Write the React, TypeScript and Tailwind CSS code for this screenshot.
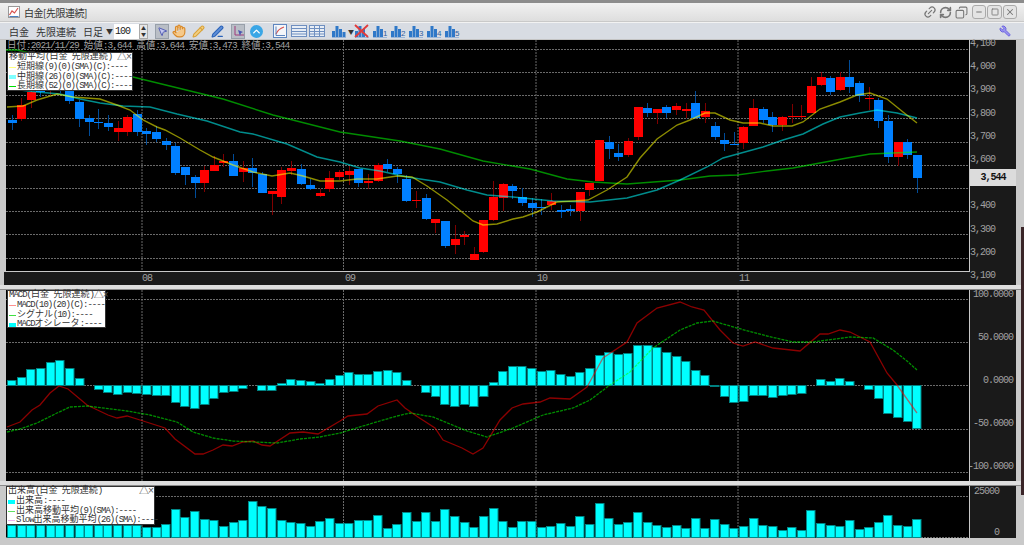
import { Hand, MousePointer2, Pencil, PenLine, Wrench, ChevronUp, Link2, RefreshCw, Copy, X, Minus, Square } from 'lucide-react'

const mono = "font-['Liberation_Mono','Noto_Sans_CJK_JP',monospace] text-[10px] tracking-[-1px]"
const mixed = "font-['Liberation_Mono','Noto_Sans_CJK_JP',monospace]"

// [wick top, body top, body bottom, wick bottom, up?]
const candles: [number, number, number, number, number][] = [
  [115,120,123,130,0],[98,105,119,121,1],[88,92,100,108,1],[85,90,92,97,0],[85,88,90,95,1],[85,88,90,93,0],[88,90,101,104,0],[100,102,119,127,0],
  [115,118,122,136,0],[109,122,123,129,0],[115,123,127,131,0],[121,128,132,141,1],[115,117,132,136,1],[110,114,132,136,0],[128,131,134,145,0],[126,132,139,142,0],
  [138,141,145,150,0],[143,146,173,175,0],[167,167,175,185,0],[175,177,183,198,0],[166,170,183,192,1],[156,165,171,171,1],[154,161,163,167,1],[154,161,176,176,0],
  [161,168,172,182,1],[158,168,173,187,0],[172,174,193,193,0],[191,191,194,215,1],[167,170,197,204,1],[161,168,171,175,1],[164,169,184,185,0],[179,185,189,190,0],
  [189,193,196,197,1],[171,178,189,192,1],[170,172,177,180,1],[166,171,175,185,1],[169,169,183,187,0],[174,181,183,189,1],[163,165,181,182,1],[159,164,169,172,0],
  [167,169,174,183,0],[175,179,201,202,0],[191,200,201,208,1],[194,198,219,220,0],[219,219,223,233,1],[221,221,246,248,0],[225,239,245,254,1],[231,235,237,245,1],
  [247,254,260,260,1],[220,220,252,253,1],[181,197,220,221,1],[183,184,198,211,1],[184,186,191,199,0],[188,197,203,206,0],[198,203,208,217,0],[199,207,208,215,0],
  [193,201,205,210,1],[205,210,212,218,0],[205,209,211,216,0],[192,192,211,221,1],[183,183,190,196,1],[140,140,181,181,1],[136,142,149,159,0],[144,153,157,161,0],
  [138,141,155,157,1],[107,107,137,140,1],[103,108,113,117,0],[109,109,113,124,1],[105,107,113,118,0],[103,106,110,115,1],[103,109,111,118,1],[91,103,118,119,0],
  [103,111,117,123,1],[122,126,137,140,0],[133,140,144,151,0],[132,144,145,145,0],[126,127,143,149,1],[99,108,126,126,1],[107,109,120,123,0],[112,117,125,132,0],
  [116,117,125,131,1],[104,116,117,123,1],[105,116,117,120,1],[77,86,113,113,1],[72,77,85,86,1],[76,78,92,95,0],[72,77,90,91,1],[60,77,87,93,0],
  [81,83,96,102,0],[87,98,99,110,1],[98,100,121,128,0],[115,121,157,163,0],[142,142,157,166,1],[139,142,155,159,0],[155,155,178,193,0],
]

const maShort = "7,107 23,106 37,100 57,94 73,97 100,99 117,105 130,110 143,120 157,127 165,130 180,138 200,150 213,157 233,165 253,172 272,176 290,173 303,176 320,181 340,181 357,179 377,179 397,176 412,177 427,186 447,200 462,212 473,221 483,225 497,224 513,219 523,217 537,212 557,202 573,201 588,200 607,190 627,177 640,158 657,139 677,125 690,120 705,113 715,113 730,120 743,123 760,123 773,126 792,126 803,122 820,109 840,102 857,95 870,93 887,99 903,112 917,123"
const maMid = "7,90 20,90 37,92 60,94 80,99 100,103 123,106 150,107 177,114 207,121 240,132 253,134 287,144 317,157 340,162 360,168 380,171 407,177 440,182 467,190 487,195 513,197 553,201 590,202 627,198 657,190 680,180 707,167 723,158 763,147 783,140 803,134 823,124 840,117 860,113 877,110 897,113 917,118"
const maLong = "6,50 17,50 133,77 223,99 273,115 340,132 400,141 440,149 483,161 530,169 567,179 593,182 627,184 680,180 710,176 737,175 767,171 793,168 820,163 847,158 870,154 893,153 917,152"

const macdTops = [380,377,369,368,362,360,368,378,385,389,392,394,392,393,394,395,395,402,406,408,404,398,392,391,388,385,390,390,383,379,380,381,383,379,375,372,374,374,371,370,372,380,385,392,396,404,406,404,406,396,382,371,366,366,368,371,370,374,376,372,368,355,352,354,353,345,345,347,352,356,361,370,375,386,396,402,401,395,395,397,395,394,393,385,379,381,378,381,385,389,398,413,417,421,428]
const macdLine = "7,427 20,422 32,410 40,405 50,393 59,386 68,389 87,405 108,415 117,418 127,416 140,420 165,428 175,439 195,454 203,454 213,450 223,445 232,446 243,442 253,441 262,445 270,446 290,433 303,432 318,434 340,421 348,416 367,414 378,406 397,400 405,408 418,417 435,428 443,440 462,448 473,454 483,448 500,420 512,408 523,404 540,402 550,398 570,399 587,387 603,358 627,342 637,323 657,308 680,302 692,307 704,310 720,330 733,343 743,346 755,342 773,348 800,351 820,334 828,334 840,330 850,332 870,342 887,373 897,385 917,413"
const signalLine = "7,432 20,429 37,423 57,413 70,407 87,406 127,411 150,415 177,422 193,432 213,438 233,441 277,443 300,439 320,437 340,433 373,423 397,416 410,413 433,417 467,431 487,437 513,428 543,415 573,408 590,400 610,385 630,372 653,348 680,330 697,323 713,321 737,328 767,336 793,342 813,342 850,337 873,338 893,350 907,361 917,370"

const volTops = [525,525,525,525,525,525,525,525,525,525,525,525,525,525,527,527,524,509,517,511,519,520,526,522,520,501,506,508,520,522,523,526,521,518,523,523,520,520,515,528,524,512,521,512,521,509,516,522,527,516,508,521,527,521,521,527,526,523,526,516,524,503,518,524,522,512,522,525,527,525,528,518,528,519,524,528,526,518,525,526,530,527,530,510,523,525,526,520,529,527,522,515,525,526,519]

const vLines = [142, 343.5, 536, 738]
const priceGrid = [49, 72, 95, 118, 142, 165, 188, 211, 234, 258]
const macdGrid = [299, 342, 385, 429, 472]
const priceLabels = ['4,100', '4,000', '3,900', '3,800', '3,700', '3,600', '3,500', '3,400', '3,300', '3,200', '3,100']
const macdLabels = ['100.0000', '50.0000', '0.0000', '-50.0000', '-100.0000']

const xAt = (i: number) => 11.6 + i * 9.63

// half width runs get squeezed, the kanji keep their own width
function Squeezed({ text, tight }: { text: string; tight: string }) {
  return (
    <>
      {text.split(/([\x20-\x7e]+)/).map((run, i) => (
        <span key={i} className={i % 2 ? tight : ''}>{run}</span>
      ))}
    </>
  )
}

function Grid({ rows, top, bottom }: { rows: number[]; top: number; bottom: number }) {
  return (
    <g stroke="#6a6a6a" strokeWidth="1" strokeDasharray="2 1">
      {rows.map((y) => <line key={y} x1="6" x2="970" y1={y + 0.5} y2={y + 0.5} />)}
      {vLines.map((x) => <line key={x} x1={x} x2={x} y1={top} y2={bottom} />)}
    </g>
  )
}

function Bars({ tops, zero, edge }: { tops: number[]; zero: number; edge: string }) {
  return (
    <g fill="#00ffff" stroke={edge} strokeWidth="1">
      {tops.map((t, i) => (
        <rect key={i} x={Math.round(xAt(i) - 4.5) + 0.5} y={Math.min(t, zero) + 0.5} width="8.5" height={Math.abs(t - zero)} />
      ))}
    </g>
  )
}

function Legend({ title, rows, className }: { title: string; rows: [string, string, boolean?][]; className: string }) {
  return (
    <div className={`absolute bg-white border border-[#333] text-[#333] ${mixed} text-[9px] leading-[9.5px] px-[1px] ${className}`}>
      <div className="flex justify-between whitespace-nowrap h-[10px]">
        <span><Squeezed text={title} tight="tracking-[-1px]" /></span>
        <span className="text-[10px] tracking-[-1px] text-[#555]">△×</span>
      </div>
      {rows.map(([label, color, block]) => (
        <div key={label} className="flex items-center h-[9.5px] whitespace-nowrap">
          <span className={`w-[7px] mr-[1px] shrink-0 ${block ? 'h-[4px]' : 'h-[1px]'}`} style={{ background: color }} />
          <span><Squeezed text={label} tight="tracking-[-1px]" /></span>
        </div>
      ))}
    </div>
  )
}

function BarIcon({ n, cross }: { n?: string; cross?: boolean }) {
  return (
    <svg width="18" height="16" viewBox="0 0 18 16" className="shrink-0">
      <path d="M2 14.5h14" stroke="#9db7d8" />
      <rect x="2" y="8" width="3" height="6" fill="#2f78c8" />
      <rect x="5.5" y="3" width="3" height="11" fill="#2f78c8" />
      <rect x="9" y="6" width="3" height="8" fill="#2f78c8" />
      {n && <text x="12" y="13" fontSize="8" fontFamily="Liberation Sans" fill="#2f5f9f">{n}</text>}
      {!n && !cross && <rect x="12.5" y="9" width="3" height="5" fill="#2f78c8" />}
      {cross && <path d="M2 2l13 12M15 2L2 14" stroke="#e23a3a" strokeWidth="1.8" />}
    </svg>
  )
}

function GridIcon({ dense }: { dense?: boolean }) {
  return (
    <svg width="18" height="16" viewBox="0 0 18 16" className="shrink-0">
      <rect x="1.5" y="2.5" width="15" height="11" fill="#e8eef6" stroke="#6f8fc0" />
      <path d="M1.5 5.5h15M1.5 8.5h15M1.5 11h15" stroke="#6f8fc0" />
      {dense && <path d="M6.5 2.5v11M11.5 2.5v11" stroke="#6f8fc0" />}
    </svg>
  )
}

export default function App() {
  return (
    <div className="relative w-[1024px] h-[545px] overflow-hidden bg-[#c9c9c9] flex flex-col">
      <div className="h-[3px] bg-[#8c8c8c]" />
      {/* title bar */}
      <div className="h-[18px] flex items-center bg-gradient-to-b from-[#f1f1f1] to-[#dedede] pl-[8px] pr-[7px] font-['Noto_Sans_CJK_JP',sans-serif] text-[10px] tracking-[-0.5px] text-[#333]">
        <svg width="12" height="12" viewBox="0 0 12 12" className="mr-[3px]">
          <rect x="0.5" y="0.5" width="11" height="11" fill="#fff" stroke="#999" />
          <path d="M1.5 9L4 5l2.5 2L10 2" fill="none" stroke="#d9534f" strokeWidth="1.2" />
          <path d="M1.5 10.5h9" stroke="#4a7fc0" />
        </svg>
        <span className="ml-[1px]">白金[先限連続]</span>
        <div className="ml-auto flex items-center text-[#777]">
          <Link2 size={14} className="mr-[2px] -rotate-45" />
          <RefreshCw size={13} strokeWidth={3} className="mr-[3px]" />
          <Copy size={13} className="mr-[4px] -scale-x-100" />
          <div className="w-[14px] h-[14px] mr-[1px] rounded-[3px] border border-[#aaa] bg-[#e4e4e4] flex items-center justify-center"><Minus size={8} strokeWidth={3} /></div>
          <div className="w-[15px] h-[14px] mr-[1px] rounded-[3px] border border-[#aaa] bg-[#e4e4e4] flex items-center justify-center"><Square size={8} strokeWidth={2.5} /></div>
          <div className="w-[14px] h-[14px] rounded-[3px] border border-[#aaa] bg-[#e4e4e4] flex items-center justify-center"><X size={10} strokeWidth={2.5} /></div>
        </div>
      </div>
      {/* toolbar */}
      <div className="h-[17px] mt-[1px] flex items-center bg-[#d8dce3] border-t border-[#f2f2f2] pl-[9px] pr-[13px] font-['Noto_Sans_CJK_JP',sans-serif] text-[10px] text-[#333]">
        <span className="w-[27px]">白金</span>
        <span className="w-[47px]">先限連続</span>
        <span className="w-[23px]">日足</span>
        <span className="w-[8px] text-[7px]">▼</span>
        <span className={`w-[25px] h-[15px] bg-white ${mono} text-[#222] leading-[15px] pl-[1px]`}>100</span>
        <span className="w-[9px] h-[15px] bg-[#e6e6e6] border border-[#aaa] flex flex-col items-center justify-center text-[5px] leading-[6px]"><span>▲</span><span>▼</span></span>
        <div className="ml-[7px] w-[14px] h-[15px] bg-[#b9bec6] border border-[#98a0aa] flex items-center justify-center"><MousePointer2 size={11} color="#4a55b0" fill="#c4c8f0" /></div>
        <Hand size={14} color="#d8892a" fill="#f6c98a" className="ml-[3px]" />
        <Pencil size={13} color="#d8a23a" fill="#f3cf80" className="ml-[6px]" />
        <PenLine size={13} color="#2a62b8" fill="#5f8fd8" className="ml-[6px]" />
        <div className="ml-[7px] w-[14px] h-[15px] bg-[#b9bec6] border border-[#98a0aa] flex items-center justify-center">
          <svg width="11" height="11" viewBox="0 0 11 11"><path d="M2 0v9h9" fill="none" stroke="#a03a7a" /><path d="M5 4l5 2-2 1-1 3z" fill="#4a55b0" /></svg>
        </div>
        <div className="ml-[5px] w-[13px] h-[13px] rounded-full bg-[#3aa6e6] flex items-center justify-center"><ChevronUp size={11} color="#fff" strokeWidth={3} /></div>
        <svg width="14" height="14" viewBox="0 0 14 14" className="ml-[10px]"><rect x="0.5" y="0.5" width="13" height="13" fill="#f4f6fa" stroke="#5f86bf" /><path d="M3 10c2-5 5-6 8-7" fill="none" stroke="#d9534f" strokeWidth="1.3" /><path d="M3 2.5v9h9" fill="none" stroke="#5f86bf" /></svg>
        <div className="ml-[3px]"><GridIcon /></div>
        <GridIcon dense />
        <div className="ml-[4px]"><BarIcon /></div>
        <span className="text-[6px] w-[5px]">▼</span>
        <BarIcon cross />
        <BarIcon n="1" />
        <BarIcon n="2" />
        <BarIcon n="3" />
        <BarIcon n="4" />
        <BarIcon n="5" />
        <Wrench size={12} color="#6a62e0" fill="#9a94f0" className="ml-auto -scale-x-100" />
      </div>
      <div className="h-[1px] bg-[#c4c4c4]" />

      {/* price panel */}
      <div className="flex pl-[4px]">
        <div className="w-[966px]">
          <div className="relative h-[232px] ml-[2px] bg-black border-r border-b border-[#c8c8c8]">
            <svg width="963" height="231" viewBox="6 40 963 231" className="block">
              <Grid rows={priceGrid} top={40} bottom={272} />
              {candles.map(([wt, t, b, wb, up], i) => {
                const x = Math.round(xAt(i))
                return (
                  <g key={i}>
                    <line x1={x + 0.5} x2={x + 0.5} y1={wt} y2={wb} stroke={up ? '#800000' : '#004c99'} />
                    <rect x={x - 4} y={t} width="9" height={Math.max(b - t, 1)} fill={up ? '#ff0000' : '#0080ff'} />
                  </g>
                )
              })}
              <g fill="none" strokeWidth="1.4" strokeOpacity="0.55">
                <polyline points={maLong} stroke="#00ff00" />
                <polyline points={maMid} stroke="#00ffff" />
                <polyline points={maShort} stroke="#ffff00" />
              </g>
            </svg>
            <div className={`absolute left-[1px] top-[1px] text-[#a0a0a0] ${mixed} text-[9.5px] leading-[10px] whitespace-nowrap`}>
              <Squeezed text="日付:2021/11/29 始値:3,644 高値:3,644 安値:3,473 終値:3,544" tight="tracking-[-0.9px]" />
            </div>
            <Legend
              title="移動平均(白金 先限連続)"
              className="left-[1px] top-[12px] w-[126px] h-[39px]"
              rows={[['短期線(9)(0)(SMA)(C):----', '#ffff80'], ['中期線(26)(0)(SMA)(C):----', '#80ffff', true], ['長期線(52)(0)(SMA)(C):----', '#00e000']]}
            />
          </div>
          <div className={`relative h-[13px] bg-[#1a1a1a] text-[#a0a0a0] ${mono} leading-[13px]`}>
            <span className="absolute left-[138px]">08</span>
            <span className="absolute left-[341px]">09</span>
            <span className="absolute left-[533px]">10</span>
            <span className="absolute left-[735px]">11</span>
          </div>
        </div>
        <div className={`relative w-[46px] h-[245px] bg-[#1a1a1a] text-[#a0a0a0] ${mono} leading-[8px] flex flex-col justify-between pb-[5px]`}>
          {priceLabels.map((p) => <span key={p} className={p === '3,500' ? 'invisible' : ''}>{p}</span>)}
          <div className="absolute left-0 right-0 top-[129px] h-[17px] bg-[#dcdcdc] text-[#111] font-bold leading-[17px] text-center">3,544</div>
        </div>
      </div>
      <div className="h-[5px] bg-[#dedede] border-b border-[#8a8a8a]" />

      {/* MACD panel */}
      <div className="flex pl-[6px]">
        <div className="relative w-[964px] h-[191px] bg-black border-r border-[#c8c8c8]">
          <svg width="963" height="191" viewBox="6 290 963 191" className="block">
            <Grid rows={macdGrid} top={290} bottom={481} />
            <Bars tops={macdTops} zero={385} edge="#008080" />
            <g fill="none" strokeWidth="1.3" strokeOpacity="0.55">
              <polyline points={macdLine} stroke="#ff0000" />
              <polyline points={signalLine} stroke="#00ff00" strokeDasharray="3 1" />
            </g>
          </svg>
          <Legend
            title="MACD(白金 先限連続)"
            className="left-[1px] top-0 w-[99px] h-[38px]"
            rows={[['MACD(10)(20)(C):----', '#ff9090'], ['シグナル(10):----', '#40e040'], ['MACDオシレータ:----', '#00ffff', true]]}
          />
        </div>
        <div className={`w-[46px] h-[191px] bg-[#1a1a1a] text-[#a0a0a0] ${mono} leading-[8px] flex flex-col justify-between items-end pt-[1px] pb-[10px] pr-[3px]`}>
          {macdLabels.map((p) => <span key={p}>{p}</span>)}
        </div>
      </div>
      <div className="h-[5px] bg-[#dedede] border-b border-[#8a8a8a]" />

      {/* volume panel */}
      <div className="flex pl-[6px]">
        <div className="relative w-[964px] h-[52px] bg-black border-r border-[#c8c8c8]">
          <svg width="963" height="52" viewBox="6 486 963 52" className="block">
            <Grid rows={[496, 537]} top={486} bottom={538} />
            <Bars tops={volTops} zero={537} edge="#008888" />
          </svg>
          <Legend
            title="出来高(白金 先限連続)"
            className="left-0 top-0 w-[149px] h-[39px]"
            rows={[['出来高:----', '#00ffff', true], ['出来高移動平均(9)(SMA):----', '#60e060'], ['Slow出来高移動平均(26)(SMA):----', '#f0b0f0']]}
          />
        </div>
        <div className={`w-[46px] h-[52px] bg-[#1a1a1a] text-[#a0a0a0] ${mono} leading-[10px] flex flex-col justify-between items-end pt-[1px] pr-[17px]`}>
          <span>25000</span>
          <span>0</span>
        </div>
      </div>
      <div className="absolute right-0 top-[227px] w-[3px] h-[268px] bg-[#3a2528]" />
    </div>
  )
}
